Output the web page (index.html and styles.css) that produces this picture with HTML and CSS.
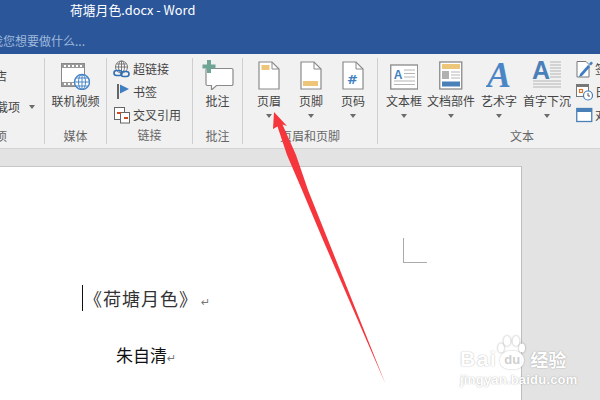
FILE: index.html
```html
<!DOCTYPE html>
<html lang="zh-CN">
<head>
<meta charset="utf-8">
<title>荷塘月色.docx - Word</title>
<link rel="stylesheet" href="styles.css">
</head>
<body>
<div class="app">
  <header class="titlebar">
    <div class="title">荷塘月色.docx - Word</div>
    <div class="tell"><span>告诉我您想要做什么...</span></div>
  </header>
  <nav class="ribbon">
    <section class="group g-addin">
      <div class="content addin">
        <div class="clip w7 addin-store"><span>应用商店</span></div>
        <div class="addin-row"><div class="clip w20"><span>我的加载项</span></div><i class="caret"></i></div>
      </div>
      <div class="glabel clip w7"><span>加载项</span></div>
    </section>
    <section class="group g-media">
      <div class="content">
        <div class="big">
          <div class="ico">
            <svg width="30" height="30" viewBox="0 0 30 30"><rect x="1.500" y="3.500" width="23" height="23" fill="#fff" stroke="#8a8a8a"/><rect x="2" y="4" width="22" height="4" fill="#9a9a9a"/><rect x="2" y="22" width="22" height="4" fill="#9a9a9a"/><path d="M4 5h2v2H4zM8 5h2v2H8zM12 5h2v2h-2zM16 5h2v2h-2zM20 5h2v2h-2zM4 23h2v2H4zM8 23h2v2H8zM12 23h2v2h-2z" fill="#fff"/><circle cx="22" cy="22" r="7.500" fill="#fff" stroke="#4a86c5" stroke-width="1.400"/><path d="M14.500 22h15M22 14.500v15M16 18h12M16 26h12" stroke="#4a86c5"/><ellipse cx="22" cy="22" rx="3.500" ry="7.500" fill="none" stroke="#4a86c5"/></svg>
          </div>
          <span class="blabel">联机视频</span>
        </div>
      </div>
      <div class="glabel">媒体</div>
    </section>
    <section class="group g-links">
      <div class="content stack">
        <div class="row">
          <svg width="17" height="18" viewBox="0 0 17 18"><circle cx="8.500" cy="7" r="6" fill="#fff" stroke="#777"/><path d="M2.500 7h12M8.500 1v12M3.500 4h10" stroke="#777"/><ellipse cx="8.500" cy="7" rx="3" ry="6" fill="none" stroke="#777"/><rect x="1" y="10.500" width="8" height="5" rx="2.500" fill="none" stroke="#2f6fb5" stroke-width="1.600"/><rect x="8" y="11.500" width="8" height="5" rx="2.500" fill="none" stroke="#2f6fb5" stroke-width="1.600"/></svg>
          <span>超链接</span>
        </div>
        <div class="row">
          <svg width="17" height="18" viewBox="0 0 17 18"><rect x="4" y="1" width="2" height="15" fill="#666"/><path d="M7 1.500l9 4.500-9 4.500z" fill="#3f7fc1"/></svg>
          <span>书签</span>
        </div>
        <div class="row">
          <svg width="17" height="18" viewBox="0 0 17 18"><rect x="1.500" y="1.500" width="10" height="12" fill="#fff" stroke="#666"/><rect x="7.500" y="6.500" width="9" height="10.500" fill="#fff" stroke="#666"/><path d="M4 7h4M11 12h4" stroke="#d04a20" stroke-width="1.800"/></svg>
          <span>交叉引用</span>
        </div>
      </div>
      <div class="glabel">链接</div>
    </section>
    <section class="group g-comment">
      <div class="content">
        <div class="big">
          <div class="ico">
            <svg width="32" height="30" viewBox="0 0 32 30"><path d="M5.500 8.500h24a1.500 1.500 0 0 1 1.500 1.500v14a1.500 1.500 0 0 1-1.500 1.500H14.500l-5 4.500v-4.500H5.500A1.500 1.500 0 0 1 4 24V10a1.500 1.500 0 0 1 1.500-1.500z" fill="#fff" stroke="#8a8a8a" stroke-width="1.200"/><path d="M5 0h4v4.500h4.500v4H9V13H5V8.500H.5v-4H5z" fill="#6fa597"/></svg>
          </div>
          <span class="blabel">批注</span>
        </div>
      </div>
      <div class="glabel">批注</div>
    </section>
    <section class="group g-hf">
      <div class="content spread">
        <div class="big wide">
          <div class="ico">
            <svg width="22" height="29" viewBox="0 0 22 29"><path d="M1 1h13l7 7v20H1z" fill="#fff" stroke="#8a8a8a" stroke-width="1.200"/><path d="M14 1v7h7" fill="none" stroke="#8a8a8a"/><rect x="3.500" y="4" width="8" height="5" fill="#edc67a"/></svg>
          </div>
          <span class="blabel">页眉</span><i class="caret"></i>
        </div>
        <div class="big wide">
          <div class="ico">
            <svg width="22" height="29" viewBox="0 0 22 29"><path d="M1 1h13l7 7v20H1z" fill="#fff" stroke="#8a8a8a" stroke-width="1.200"/><path d="M14 1v7h7" fill="none" stroke="#8a8a8a"/><rect x="3" y="20" width="15" height="5" fill="#edc67a"/></svg>
          </div>
          <span class="blabel">页脚</span><i class="caret"></i>
        </div>
        <div class="big wide">
          <div class="ico">
            <svg width="22" height="29" viewBox="0 0 22 29"><path d="M1 1h13l7 7v20H1z" fill="#fff" stroke="#8a8a8a" stroke-width="1.200"/><path d="M14 1v7h7" fill="none" stroke="#8a8a8a"/><text x="10.500" y="23" class="hash">#</text></svg>
          </div>
          <span class="blabel">页码</span><i class="caret"></i>
        </div>
      </div>
      <div class="glabel">页眉和页脚</div>
    </section>
    <section class="group g-text">
      <div class="content text-row">
        <div class="big t1">
          <div class="ico">
            <svg width="28" height="26" viewBox="0 0 28 26"><rect x=".75" y="1" width="27" height="24" fill="#fff" stroke="#8a8a8a" stroke-width="1.300"/><text x="8" y="15" class="a-small">A</text><path d="M14 6h11M14 9.500h11M14 13h11M4 17h21M4 20.500h21" stroke="#b5b5b5"/></svg>
          </div>
          <span class="blabel">文本框</span><i class="caret"></i>
        </div>
        <div class="big t2">
          <div class="ico">
            <svg width="24" height="29" viewBox="0 0 24 29"><rect x=".75" y="1" width="22" height="27" fill="#fff" stroke="#8a8a8a" stroke-width="1.300"/><rect x="3" y="3" width="18" height="5" fill="#edc67a"/><rect x="3" y="10" width="7" height="8" fill="#b0b0b0"/><path d="M12 11h9M12 14h9M12 17h9" stroke="#b5b5b5"/><rect x="3" y="20.500" width="18" height="5" fill="#4a80b8"/></svg>
          </div>
          <span class="blabel">文档部件</span><i class="caret"></i>
        </div>
        <div class="big t3">
          <div class="ico">
            <svg width="26" height="30" viewBox="0 0 26 30"><text x="13" y="27" class="a-art">A</text></svg>
          </div>
          <span class="blabel">艺术字</span><i class="caret"></i>
        </div>
        <div class="big t4">
          <div class="ico">
            <svg width="30" height="30" viewBox="0 0 30 30"><text x="0" y="19" class="a-drop">A</text><path d="M18 2h11M18 5h11M18 8h11M18 11h11M18 14h11M18 17h11M1 21h28M1 24h28M1 27h28" stroke="#b5b5b5"/></svg>
          </div>
          <span class="blabel">首字下沉</span><i class="caret"></i>
        </div>
        <div class="stack side">
          <div class="row">
            <svg width="17" height="18" viewBox="0 0 17 18"><path d="M1 1.500h9l3 3V17H1z" fill="#fff" stroke="#777"/><path d="M4 14l8-9 2 2-8 9-3 1z" fill="#3f7fc1"/><path d="M13 4l2-2.500 2 1.500-2 2.500z" fill="#3f7fc1"/></svg>
            <span>签名行</span>
          </div>
          <div class="row">
            <svg width="17" height="18" viewBox="0 0 17 18"><rect x=".5" y="1.500" width="12" height="12" fill="#fff" stroke="#777"/><rect x="1" y="1" width="12" height="3" fill="#777"/><rect x="3.500" y="6.500" width="3" height="3" fill="none" stroke="#d9772a" stroke-width="1.200"/><circle cx="12" cy="12.500" r="4.500" fill="#fff" stroke="#3f7fc1" stroke-width="1.200"/><path d="M12 10v3h2" fill="none" stroke="#555"/></svg>
            <span>日期和时间</span>
          </div>
          <div class="row">
            <svg width="17" height="18" viewBox="0 0 17 18"><rect x=".75" y="2.500" width="15" height="13" fill="#fff" stroke="#4a80b8" stroke-width="1.300"/><rect x="1" y="2" width="15" height="4" fill="#4a80b8"/></svg>
            <span>对象</span>
          </div>
        </div>
      </div>
      <div class="glabel">文本</div>
    </section>
  </nav>
  <main class="workspace">
    <article class="page">
      <div class="cropmark"></div>
      <div class="doc-title"><span>《荷塘月色》</span><span class="ret">↵</span></div>
      <div class="doc-author"><span>朱自清</span><span class="ret">↵</span></div>
    </article>
  </main>
  <svg class="arrow" width="600" height="400" viewBox="0 0 600 400"><path d="M274 112L287 126 282.500 124.500 296 155 308 190 328 240 385.500 384 323 240 302 190 287 155 277.500 126.500 273 129z" fill="#f5373d"/></svg>
  <div class="watermark">
    <div class="wm-top">
      <span class="wm-bai">Bai</span>
      <span class="wm-du">du</span>
      <span class="wm-jy">经验</span>
      <svg class="wm-paw" width="28" height="20" viewBox="0 0 28 20"><ellipse cx="4" cy="13" rx="3" ry="4.500"/><ellipse cx="10" cy="6" rx="3.500" ry="5"/><ellipse cx="19" cy="6" rx="3.500" ry="5"/><ellipse cx="25" cy="13" rx="3" ry="4.500"/></svg>
    </div>
    <div class="wm-url">jingyan.baidu.com</div>
  </div>
</div>
</body>
</html>
```

FILE: styles.css
```css
* { box-sizing: border-box; }
html, body { margin: 0; padding: 0; }
body { width: 600px; height: 400px; overflow: hidden; font-family: "Noto Sans CJK SC", "Liberation Sans", sans-serif; }
.app { position: relative; width: 600px; height: 400px; overflow: hidden; display: flex; flex-direction: column; }

.titlebar { height: 54px; background: #2b579a; flex: none; }
.title { height: 20px; padding-left: 70px; font-size: 12.800px; line-height: 20px; color: #fff; }
.tell { width: 85px; height: 16px; margin-top: 13px; display: flex; justify-content: flex-end; overflow: hidden; white-space: nowrap; font-size: 12px; line-height: 16px; color: #9fb8dc; }

.ribbon { height: 95px; flex: none; display: flex; overflow: hidden; padding-top: 4px; background: #f1f1f1; border-bottom: 1px solid #d2d2d2; font-size: 12px; color: #444; }
.group { flex: none; height: 86px; display: flex; flex-direction: column; border-right: 1px solid #cfcfcf; }
.g-addin { width: 45px; }
.g-media { width: 62px; }
.g-links { width: 86px; }
.g-comment { width: 50px; }
.g-hf { width: 135px; }
.g-text { width: 288px; border-right: 0; }
.content { height: 70px; flex: none; display: flex; justify-content: center; }
.glabel { height: 16px; line-height: 16px; text-align: center; color: #666; white-space: nowrap; }

.clip { display: flex; justify-content: flex-end; overflow: hidden; white-space: nowrap; }
.w7 { width: 7px; }
.w20 { width: 20px; }
.addin { flex-direction: column; justify-content: flex-start; }
.addin-store { margin-top: 10px; height: 16px; line-height: 16px; }
.addin-row { margin-top: 15px; height: 16px; line-height: 16px; display: flex; align-items: center; gap: 9px; }

.big { display: flex; flex-direction: column; align-items: center; white-space: nowrap; }
.ico { height: 32px; display: flex; align-items: flex-end; justify-content: center; }
.blabel { margin-top: 3px; height: 16px; line-height: 16px; }
.big .caret { margin-top: 5px; }
.caret { display: block; flex: none; width: 0; height: 0; border-left: 3.500px solid transparent; border-right: 3.500px solid transparent; border-top: 4px solid #6b6b6b; }
.wide { width: 42px; }
.spread { justify-content: flex-start; padding-left: 5px; }
.text-row { justify-content: flex-start; }
.t1 { width: 36px; margin-left: 8px; }
.t2 { width: 48px; margin-left: 5px; }
.t3 { width: 36px; margin-left: 6px; }
.t4 { width: 48px; margin-left: 6px; }
.stack { display: flex; flex-direction: column; justify-content: flex-start; padding-left: 6px; margin-top: -1px; }
.side { margin-left: 0; margin-top: -1px; padding-left: 5px; }

.row { height: 23px; flex: none; display: flex; align-items: center; gap: 3px; white-space: nowrap; }
.side .row { gap: 2px; }

.hash { font: bold 13px "DejaVu Sans", sans-serif; fill: #3f7fc1; text-anchor: middle; }
.a-small { font: bold 12px "Liberation Sans", sans-serif; fill: #3f7fc1; text-anchor: middle; }
.a-art { font: italic bold 36px "Liberation Serif", serif; fill: #4a86c5; text-anchor: middle; }
.a-drop { font: bold 25px "Liberation Sans", sans-serif; fill: #4a80b8; }

.workspace { flex: 1; background: #e3e3e3; padding-top: 17px; overflow: hidden; }
.page { width: 522px; height: 260px; background: #fff; border-top: 1px solid #c6c6c6; border-right: 1px solid #bdbdbd; padding-top: 71px; color: #000; }
.cropmark { width: 24px; height: 25px; margin-left: 403px; border-left: 1px solid #aaa; border-bottom: 1px solid #aaa; }
.doc-title { margin: 22px 0 0 82px; height: 26px; line-height: 26px; border-left: 1px solid #111; padding-left: 1px; font-size: 18px; letter-spacing: 1px; color: #333; white-space: nowrap; }
.doc-author { margin: 32px 0 0 116px; height: 24px; line-height: 24px; font-size: 17px; color: #111; white-space: nowrap; }
.ret { font: 11px "DejaVu Sans", sans-serif; color: #777; letter-spacing: 0; }
.doc-title .ret { margin-left: 3px; }

.arrow { position: absolute; left: 0; top: 0; pointer-events: none; }
.watermark { position: absolute; left: 460px; top: 335px; width: 130px; color: #fff; }
.wm-top { position: relative; height: 34px; display: flex; align-items: flex-end; font-family: "Liberation Sans", sans-serif; text-shadow: 0 0 1.500px rgba(0,0,0,.35); }
.wm-bai { font-size: 21px; line-height: 20px; letter-spacing: 1.500px; font-weight: 700; }
.wm-du { margin-left: 3px; width: 24px; height: 18px; font-size: 13px; line-height: 17px; text-align: center; font-weight: 700; border-radius: 10px 10px 9px 9px; background: rgba(255,255,255,.9); box-shadow: 0 0 2px rgba(0,0,0,.3); color: #cfcfcf; text-shadow: none; }
.wm-jy { font: 700 18px/20px "Noto Sans CJK SC", sans-serif; margin-left: 6px; }
.wm-paw { position: absolute; left: 37px; top: 0; fill: #fff; filter: drop-shadow(0 0 1px rgba(0,0,0,.35)); }
.wm-url { margin-top: 3px; font: 700 13px/16px "Liberation Sans", sans-serif; letter-spacing: .2px; white-space: nowrap; text-shadow: 0 0 1.500px rgba(0,0,0,.35); }
```
